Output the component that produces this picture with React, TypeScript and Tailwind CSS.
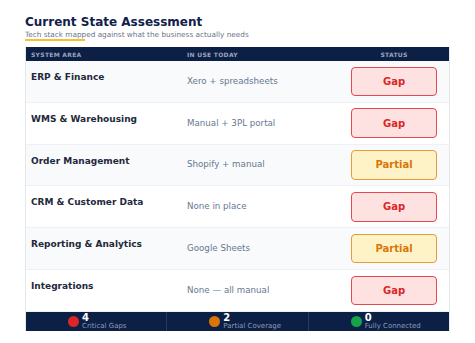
import React from "react";

type Status = "Gap" | "Partial";

const rows: { area: string; tool: string; status: Status }[] = [
  { area: "ERP & Finance", tool: "Xero + spreadsheets", status: "Gap" },
  { area: "WMS & Warehousing", tool: "Manual + 3PL portal", status: "Gap" },
  { area: "Order Management", tool: "Shopify + manual", status: "Partial" },
  { area: "CRM & Customer Data", tool: "None in place", status: "Gap" },
  { area: "Reporting & Analytics", tool: "Google Sheets", status: "Partial" },
  { area: "Integrations", tool: "None \u2014 all manual", status: "Gap" },
];

const stats = [
  { n: "4", label: "Critical Gaps", dot: "bg-[#dc2626]" },
  { n: "2", label: "Partial Coverage", dot: "bg-[#d97706]" },
  { n: "0", label: "Fully Connected", dot: "bg-[#16a34a]" },
];

export default function App() {
  return (
    <div
      className="w-[475px] h-[343px] bg-white px-[25px] pt-[14px]"
      style={{ fontFamily: '"DejaVu Sans", Verdana, sans-serif' }}
    >
      <h1 className="text-[12px] leading-[16px] font-bold text-[#10214a]">
        Current State Assessment
      </h1>
      <p className="text-[7.3px] leading-[9px] text-[#6b7589]">
        Tech stack mapped against what the business actually needs
      </p>
      <div className="w-[60px] h-[1.5px] bg-[#f2c230]" />

      <div className="mt-[6.5px] w-[425px] border-x border-[#e2e8f0]">
        <div className="flex h-[14px] items-center bg-[#0c1f45] text-[6px] font-bold tracking-[0.3px] text-[#9aa6bb]">
          <div className="w-[156px] pl-[5px]">SYSTEM AREA</div>
          <div className="w-[164px] pl-[5px]">IN USE TODAY</div>
          <div className="w-[86px] ml-[5px] text-center">STATUS</div>
        </div>
        {rows.map((r, i) => (
          <div
            key={r.area}
            className={`flex h-[41.8px] border-b border-[#edf0f4] ${
              i % 2 === 0 ? "bg-[#f8fafc]" : "bg-white"
            }`}
          >
            <div className="w-[156px] pl-[5px] pt-[11px] text-[9px] leading-[11px] font-bold text-[#1e293b]">
              {r.area}
            </div>
            <div className="w-[164px] pl-[5px] flex items-center text-[8.7px] text-[#667891]">
              {r.tool}
            </div>
            <div className="flex items-center pl-[5px]">
              {r.status === "Gap" ? (
                <div className="w-[86px] h-[29.5px] rounded-[4px] border-[1.5px] border-[#e5484d] bg-[#fee2e2] flex items-center justify-center text-[10px] font-bold text-[#dc2626]">
                  Gap
                </div>
              ) : (
                <div className="w-[86px] h-[29.5px] rounded-[4px] border-[1.5px] border-[#e8993a] bg-[#fef3c7] flex items-center justify-center text-[10px] font-bold text-[#d97706]">
                  Partial
                </div>
              )}
            </div>
          </div>
        ))}
        <div className="flex h-[19px] bg-[#0c1f45]">
          {stats.map((s, i) => (
            <div
              key={s.label}
              className={`flex-1 flex items-center pl-[42px] ${
                i > 0 ? "border-l border-[#2a3a5c]" : ""
              }`}
            >
              <div className={`w-[11px] h-[11px] rounded-full ${s.dot}`} />
              <div className="ml-[3px] flex flex-col">
                <span className="text-[10px] leading-[9px] font-bold text-white">{s.n}</span>
                <span className="text-[7px] leading-[8px] text-[#8d9bb5]">{s.label}</span>
              </div>
            </div>
          ))}
        </div>
      </div>
    </div>
  );
}
